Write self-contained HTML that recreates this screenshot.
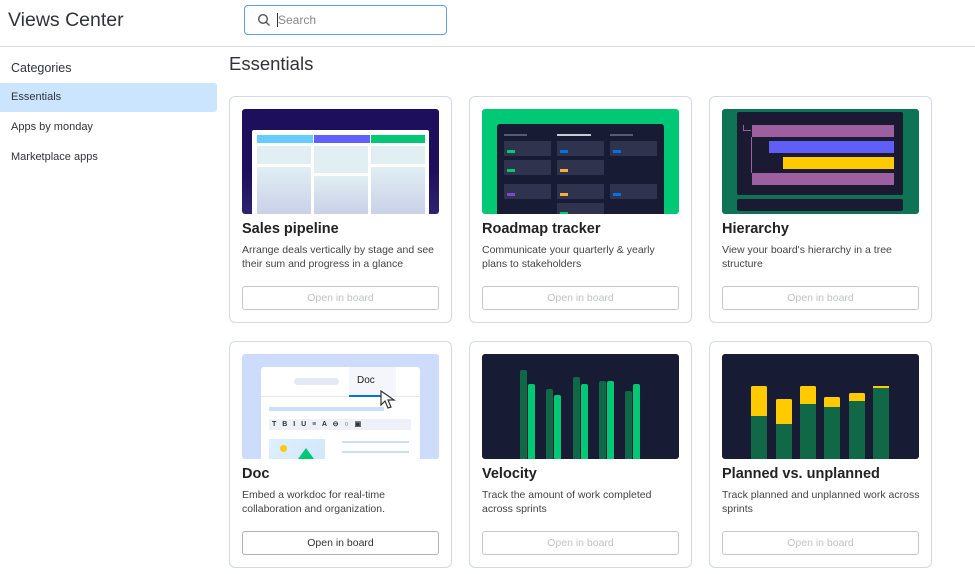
<!DOCTYPE html>
<html><head><meta charset="utf-8"><style>
*{box-sizing:border-box;margin:0;padding:0}
body{width:975px;height:574px;overflow:hidden;background:#fff;font-family:"Liberation Sans",sans-serif;color:#323338;position:relative}
.abs{position:absolute}
.hdr{left:0;top:0;width:975px;height:47px;border-bottom:1px solid #d8d9e3}
.title{left:8px;top:9px;font-size:19.5px;color:#323338}
.search{left:244px;top:5px;width:203px;height:30px;border:1.5px solid #5e9ff0;border-radius:4px}
.side{font-size:11px;color:#323338}
.card{width:223px;height:227px;border:1px solid #d5d8e6;border-radius:6px;background:#fff}
.img{position:absolute;left:12px;top:12px;width:197px;height:105px;border-radius:3px;overflow:hidden}
.ct{position:absolute;left:12px;top:124px;font-size:14.5px;font-weight:bold;color:#222}
.cd{position:absolute;left:12px;top:146px;font-size:10.5px;line-height:14px;color:#444;width:200px}
.btn{position:absolute;left:12px;top:189px;width:197px;height:24px;border:1px solid #c5c7d0;border-radius:3px;font-size:10.5px;text-align:center;line-height:22px;color:#c0c2c8}
.btn.on{color:#323338;border-color:#b0b2ba}
</style></head><body>
<div class="abs hdr"></div>
<div class="abs title">Views Center</div>
<div class="abs search">
<svg class="abs" style="left:12px;top:7px" width="14" height="14" viewBox="0 0 14 14"><circle cx="6" cy="6" r="4.3" fill="none" stroke="#555" stroke-width="1.4"/><path d="M9.2 9.2L12.5 12.5" stroke="#555" stroke-width="1.4"/></svg>
<div class="abs" style="left:32px;top:7px;font-size:12px;color:#888;border-left:1px solid #333;padding-left:0">Search</div>
</div>
<div class="abs side" style="left:11px;top:61px;font-size:12.5px">Categories</div>
<div class="abs" style="left:0;top:83px;width:217px;height:29px;background:#cce5ff;border-radius:0 3px 3px 0"></div>
<div class="abs side" style="left:11px;top:91px">Essentials</div>
<div class="abs side" style="left:11px;top:121px">Apps by monday</div>
<div class="abs side" style="left:11px;top:151px">Marketplace apps</div>
<div class="abs" style="left:229px;top:53px;font-size:18.5px;color:#323338">Essentials</div>

<!-- Card 1 -->
<div class="abs card" style="left:229px;top:96px">
<div class="img" style="background:linear-gradient(#1e0f5c 60%,#2e2370)">
<div class="abs" style="left:10px;top:21px;width:177px;height:90px;background:#fff;border-radius:2px"></div>
<div class="abs" style="left:15px;top:26px;width:56px;height:8px;background:#66ccff"></div>
<div class="abs" style="left:72px;top:26px;width:56px;height:8px;background:#6161ff"></div>
<div class="abs" style="left:129px;top:26px;width:54px;height:8px;background:#00c875"></div>
<div class="abs" style="left:15px;top:37px;width:54px;height:18px;background:#e1eef2"></div>
<div class="abs" style="left:72px;top:37px;width:54px;height:27px;background:#e1eef2"></div>
<div class="abs" style="left:129px;top:37px;width:54px;height:18px;background:#e1eef2"></div>
<div class="abs" style="left:15px;top:58px;width:54px;height:50px;background:linear-gradient(#e1eef2,#c8cfe8)"></div>
<div class="abs" style="left:72px;top:67px;width:54px;height:40px;background:linear-gradient(#e1eef2,#c8cfe8)"></div>
<div class="abs" style="left:129px;top:58px;width:54px;height:50px;background:linear-gradient(#e1eef2,#c8cfe8)"></div>
</div>
<div class="ct">Sales pipeline</div>
<div class="cd">Arrange deals vertically by stage and see their sum and progress in a glance</div>
<div class="btn">Open in board</div>
</div>

<!-- Card 2 -->
<div class="abs card" style="left:469px;top:96px">
<div class="img" style="background:#00c875">
<div class="abs" style="left:15px;top:15px;width:167px;height:95px;background:#181b34;border-radius:3px"></div>
<div class="abs" style="left:22px;top:25px;width:23px;height:2px;background:#555a75"></div>
<div class="abs" style="left:75px;top:25px;width:34px;height:2px;background:#c8cad8"></div>
<div class="abs" style="left:128px;top:25px;width:23px;height:2px;background:#555a75"></div>
<div class="abs" style="left:22px;top:32px;width:47px;height:15px;background:#30334d"></div><div class="abs" style="left:25px;top:41px;width:8px;height:3px;background:#00c875"></div>
<div class="abs" style="left:75px;top:32px;width:47px;height:15px;background:#30334d"></div><div class="abs" style="left:78px;top:41px;width:8px;height:3px;background:#0073ea"></div>
<div class="abs" style="left:128px;top:32px;width:47px;height:15px;background:#30334d"></div><div class="abs" style="left:131px;top:41px;width:8px;height:3px;background:#0073ea"></div>
<div class="abs" style="left:22px;top:51px;width:47px;height:15px;background:#30334d"></div><div class="abs" style="left:25px;top:60px;width:8px;height:3px;background:#00c875"></div>
<div class="abs" style="left:75px;top:51px;width:47px;height:15px;background:#30334d"></div><div class="abs" style="left:78px;top:60px;width:8px;height:3px;background:#fdab3d"></div>
<div class="abs" style="left:22px;top:75px;width:47px;height:15px;background:#30334d"></div><div class="abs" style="left:25px;top:84px;width:8px;height:3px;background:#784bd1"></div>
<div class="abs" style="left:75px;top:75px;width:47px;height:15px;background:#30334d"></div><div class="abs" style="left:78px;top:84px;width:8px;height:3px;background:#fdab3d"></div>
<div class="abs" style="left:128px;top:75px;width:47px;height:15px;background:#30334d"></div><div class="abs" style="left:131px;top:84px;width:8px;height:3px;background:#0073ea"></div>
<div class="abs" style="left:75px;top:94px;width:47px;height:15px;background:#30334d"></div><div class="abs" style="left:78px;top:103px;width:8px;height:3px;background:#00c875"></div>
</div>
<div class="ct">Roadmap tracker</div>
<div class="cd">Communicate your quarterly &amp; yearly plans to stakeholders</div>
<div class="btn">Open in board</div>
</div>

<!-- Card 3 -->
<div class="abs card" style="left:709px;top:96px">
<div class="img" style="background:#0f7355">
<div class="abs" style="left:15px;top:3px;width:166px;height:83px;background:#1a1b33;border-radius:2px"></div>
<div class="abs" style="left:15px;top:90px;width:166px;height:12px;background:#1a1b33;border-radius:2px"></div>
<div class="abs" style="left:30px;top:16px;width:142px;height:12px;background:#9d5fa0"></div>
<div class="abs" style="left:47px;top:32px;width:125px;height:12px;background:#5f5ff8"></div>
<div class="abs" style="left:61px;top:48px;width:111px;height:12px;background:#ffcb00"></div>
<div class="abs" style="left:30px;top:64px;width:142px;height:12px;background:#9d5fa0"></div>
<div class="abs" style="left:29px;top:28px;width:1px;height:36px;background:#9d5fa0"></div>
<div class="abs" style="left:21px;top:16px;height:6px;border-left:1px solid #9d5fa0;border-bottom:1px solid #9d5fa0;width:8px"></div>
</div>
<div class="ct">Hierarchy</div>
<div class="cd">View your board's hierarchy in a tree structure</div>
<div class="btn">Open in board</div>
</div>

<!-- Card 4 -->
<div class="abs card" style="left:229px;top:341px">
<div class="img" style="background:#cddcfb">
<div class="abs" style="left:19px;top:13px;width:159px;height:95px;background:#fff;border-radius:3px"></div>
<div class="abs" style="left:19px;top:42px;width:159px;height:1px;background:#e6e8f0"></div>
<div class="abs" style="left:52px;top:24px;width:45px;height:7px;background:#e4e9f5;border-radius:4px"></div>
<div class="abs" style="left:107px;top:13px;width:47px;height:29px;background:#f4f6fb"></div>
<div class="abs" style="left:115px;top:21px;font-size:10px;color:#222">Doc</div>
<div class="abs" style="left:107px;top:41px;width:37px;height:2px;background:#0073ea"></div>
<svg class="abs" style="left:137px;top:36px" width="20" height="20" viewBox="0 0 20 20"><path d="M2 1L2 15L6 11L9 18L12 17L9 10L15 10Z" fill="#fff" stroke="#333" stroke-width="1.2"/></svg>
<div class="abs" style="left:27px;top:53px;width:115px;height:4px;background:#cddcfb"></div>
<div class="abs" style="left:27px;top:65px;width:142px;height:11px;background:#eef1f8;font-size:7px;font-weight:bold;color:#333;line-height:11px;padding-left:3px;letter-spacing:2px">T B I U ≡ A ⊖ ○ ▣</div>
<div class="abs" style="left:27px;top:85px;width:56px;height:25px;background:linear-gradient(135deg,#dff0ff,#cfe6fa)"></div>
<div class="abs" style="left:38px;top:91px;width:7px;height:7px;border-radius:50%;background:#ffcb00"></div>
<div class="abs" style="left:56px;top:94px;width:0;height:0;border-left:8px solid transparent;border-right:8px solid transparent;border-bottom:11px solid #00c875"></div>
<div class="abs" style="left:100px;top:87px;width:67px;height:2px;background:#cddcfb"></div>
<div class="abs" style="left:100px;top:97px;width:67px;height:2px;background:#cddcfb"></div>
</div>
<div class="ct">Doc</div>
<div class="cd">Embed a workdoc for real-time collaboration and organization.</div>
<div class="btn on">Open in board</div>
</div>

<!-- Card 5 -->
<div class="abs card" style="left:469px;top:341px">
<div class="img" style="background:#181b34">
<div class="abs" style="left:38px;top:16px;width:7px;height:95px;background:#116846;border-radius:2px 2px 0 0"></div>
<div class="abs" style="left:46px;top:30px;width:7px;height:85px;background:#00c875;border-radius:2px 2px 0 0"></div>
<div class="abs" style="left:64px;top:35px;width:7px;height:80px;background:#116846;border-radius:2px 2px 0 0"></div>
<div class="abs" style="left:72px;top:41px;width:7px;height:74px;background:#00c875;border-radius:2px 2px 0 0"></div>
<div class="abs" style="left:91px;top:23px;width:7px;height:90px;background:#116846;border-radius:2px 2px 0 0"></div>
<div class="abs" style="left:99px;top:30px;width:7px;height:85px;background:#00c875;border-radius:2px 2px 0 0"></div>
<div class="abs" style="left:117px;top:27px;width:7px;height:88px;background:#116846;border-radius:2px 2px 0 0"></div>
<div class="abs" style="left:125px;top:27px;width:7px;height:88px;background:#00c875;border-radius:2px 2px 0 0"></div>
<div class="abs" style="left:143px;top:37px;width:7px;height:78px;background:#116846;border-radius:2px 2px 0 0"></div>
<div class="abs" style="left:151px;top:30px;width:7px;height:85px;background:#00c875;border-radius:2px 2px 0 0"></div>
</div>
<div class="ct">Velocity</div>
<div class="cd">Track the amount of work completed across sprints</div>
<div class="btn">Open in board</div>
</div>

<!-- Card 6 -->
<div class="abs card" style="left:709px;top:341px">
<div class="img" style="background:#181b34">
<div class="abs" style="left:29px;top:32px;width:16px;height:80px;background:#116846"></div><div class="abs" style="left:29px;top:32px;width:16px;height:30px;background:#ffcb00;border-radius:2px 2px 0 0"></div>
<div class="abs" style="left:54px;top:45px;width:16px;height:70px;background:#116846"></div><div class="abs" style="left:54px;top:45px;width:16px;height:25px;background:#ffcb00;border-radius:2px 2px 0 0"></div>
<div class="abs" style="left:78px;top:32px;width:16px;height:80px;background:#116846"></div><div class="abs" style="left:78px;top:32px;width:16px;height:18px;background:#ffcb00;border-radius:2px 2px 0 0"></div>
<div class="abs" style="left:102px;top:43px;width:16px;height:70px;background:#116846"></div><div class="abs" style="left:102px;top:43px;width:16px;height:10px;background:#ffcb00;border-radius:2px 2px 0 0"></div>
<div class="abs" style="left:127px;top:39px;width:16px;height:76px;background:#116846"></div><div class="abs" style="left:127px;top:39px;width:16px;height:8px;background:#ffcb00;border-radius:2px 2px 0 0"></div>
<div class="abs" style="left:151px;top:32px;width:16px;height:80px;background:#116846"></div><div class="abs" style="left:151px;top:32px;width:16px;height:2px;background:#ffcb00"></div>
</div>
<div class="ct">Planned vs. unplanned</div>
<div class="cd">Track planned and unplanned work across sprints</div>
<div class="btn">Open in board</div>
</div>
</body></html>
